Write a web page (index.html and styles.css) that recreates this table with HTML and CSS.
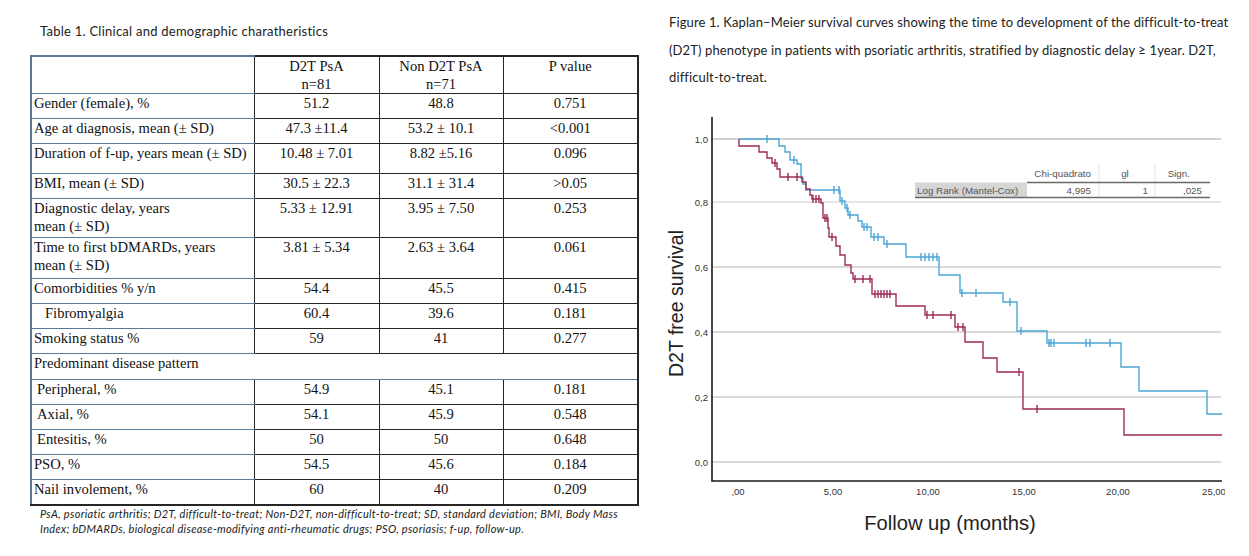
FILE: index.html
```html
<!DOCTYPE html>
<html lang="en">
<head>
<meta charset="utf-8">
<title>Table 1 and Figure 1</title>
<link rel="stylesheet" href="styles.css">
</head>
<body>
<div class="page">
  <section class="table-panel">
    <p class="table-title">Table 1. Clinical and demographic charatheristics</p>
    <table class="data">
      <colgroup><col class="c1"><col class="c2"><col class="c3"><col class="c4"></colgroup>
      <tr class="r-head"><td class="lab"></td><td>D2T PsA<br>n=81</td><td>Non D2T PsA<br>n=71</td><td>P value</td></tr>
      <tr><td class="lab">Gender (female), %</td><td>51.2</td><td>48.8</td><td>0.751</td></tr>
      <tr><td class="lab">Age at diagnosis, mean (± SD)</td><td>47.3 ±11.4</td><td>53.2 ± 10.1</td><td>&lt;0.001</td></tr>
      <tr class="r-tall"><td class="lab">Duration of f-up, years mean (± SD)</td><td>10.48 ± 7.01</td><td>8.82 ±5.16</td><td>0.096</td></tr>
      <tr><td class="lab">BMI, mean (± SD)</td><td>30.5 ± 22.3</td><td>31.1 ± 31.4</td><td>&gt;0.05</td></tr>
      <tr class="r-two"><td class="lab">Diagnostic delay, years<br>mean (± SD)</td><td>5.33 ± 12.91</td><td>3.95 ± 7.50</td><td>0.253</td></tr>
      <tr class="r-twob"><td class="lab">Time to first bDMARDs, years<br>mean (± SD)</td><td>3.81 ± 5.34</td><td>2.63 ± 3.64</td><td>0.061</td></tr>
      <tr><td class="lab">Comorbidities % y/n</td><td>54.4</td><td>45.5</td><td>0.415</td></tr>
      <tr><td class="lab ind1">Fibromyalgia</td><td>60.4</td><td>39.6</td><td>0.181</td></tr>
      <tr><td class="lab">Smoking status %</td><td>59</td><td>41</td><td>0.277</td></tr>
      <tr class="r-pat"><td class="lab span" colspan="4">Predominant disease pattern</td></tr>
      <tr><td class="lab ind2">Peripheral, %</td><td>54.9</td><td>45.1</td><td>0.181</td></tr>
      <tr><td class="lab ind2">Axial, %</td><td>54.1</td><td>45.9</td><td>0.548</td></tr>
      <tr><td class="lab ind2">Entesitis, %</td><td>50</td><td>50</td><td>0.648</td></tr>
      <tr><td class="lab">PSO, %</td><td>54.5</td><td>45.6</td><td>0.184</td></tr>
      <tr class="r-last"><td class="lab">Nail involement, %</td><td>60</td><td>40</td><td>0.209</td></tr>
    </table>
    <p class="footnote">PsA, psoriatic arthritis; D2T, difficult-to-treat; Non-D2T, non-difficult-to-treat; SD, standard deviation; BMI, Body Mass<br>Index; bDMARDs, biological disease-modifying anti-rheumatic drugs; PSO, psoriasis; f-up, follow-up.</p>
  </section>
  <section class="figure-panel">
    <p class="fig-caption">Figure 1. Kaplan–Meier survival curves showing the time to development of the difficult-to-treat<br>(D2T) phenotype in patients with psoriatic arthritis, stratified by diagnostic delay ≥ 1year. D2T,<br>difficult-to-treat.</p>
    <svg class="km" viewBox="640 110 609 446" xmlns="http://www.w3.org/2000/svg">
      <defs>
        <clipPath id="clipx"><rect x="640" y="110" width="585" height="446"/></clipPath>
      </defs>
      <line class="grid top" x1="712" y1="139" x2="1221" y2="139"/>
      <line class="grid light" x1="712" y1="202" x2="1221" y2="202"/>
      <line class="grid" x1="712" y1="267" x2="1221" y2="267"/>
      <line class="grid" x1="712" y1="332" x2="1221" y2="332"/>
      <line class="grid" x1="712" y1="397" x2="1221" y2="397"/>
      <line class="grid" x1="712" y1="462" x2="1221" y2="462"/>

      <text class="tick" x="708" y="142.5" text-anchor="end">1,0</text>
      <text class="tick" x="708" y="205.5" text-anchor="end">0,8</text>
      <text class="tick" x="708" y="270.5" text-anchor="end">0,6</text>
      <text class="tick" x="708" y="335.5" text-anchor="end">0,4</text>
      <text class="tick" x="708" y="400.5" text-anchor="end">0,2</text>
      <text class="tick" x="708" y="465.5" text-anchor="end">0,0</text>

      <g clip-path="url(#clipx)">
        <text class="tick" x="738" y="494.5" text-anchor="middle">,00</text>
        <text class="tick" x="833" y="494.5" text-anchor="middle">5,00</text>
        <text class="tick" x="928" y="494.5" text-anchor="middle">10,00</text>
        <text class="tick" x="1024" y="494.5" text-anchor="middle">15,00</text>
        <text class="tick" x="1118" y="494.5" text-anchor="middle">20,00</text>
        <text class="tick" x="1214" y="494.5" text-anchor="middle">25,00</text>
      </g>

      <text class="axis-title" transform="translate(683 303.5) rotate(-90)" text-anchor="middle">D2T free survival</text>
      <text class="axis-title x" x="950" y="530" text-anchor="middle">Follow up (months)</text>

      <!-- log rank table -->
      <line class="lr-sep" x1="1099" y1="164" x2="1099" y2="197"/>
      <line class="lr-sep" x1="1155" y1="164" x2="1155" y2="197"/>
      <rect class="lr-bg" x="915" y="182.5" width="112" height="14.5"/>
      <text class="lr" x="1091" y="177" text-anchor="end">Chi-quadrato</text>
      <text class="lr" x="1125" y="177" text-anchor="middle">gl</text>
      <text class="lr" x="1190" y="177" text-anchor="end">Sign.</text>
      <text class="lr" x="917" y="193.5">Log Rank (Mantel-Cox)</text>
      <text class="lr" x="1091" y="193.5" text-anchor="end">4,995</text>
      <text class="lr" x="1148" y="193.5" text-anchor="end">1</text>
      <text class="lr" x="1202" y="193.5" text-anchor="end">,025</text>
      <line class="lr-line" x1="1027" y1="182.5" x2="1210" y2="182.5"/>
      <line class="lr-line" x1="915" y1="197.5" x2="1210" y2="197.5"/>

      <!-- curves -->
      <path class="curve blue" d="M739,139 H779 V146 H785 V152 H790 V160 H797 V164 H801 V178 H803 V184 H806 V190 H840 V201 H845 V208 H848 V215 H858 V221 H862 V227 H871 V237 H884 V244 H906 V257 H939 V275 H960 V293 H1003 V302 H1017 V331 H1047 V343 H1121 V367 H1139 V391 H1207 V414 H1222"/>
      <path class="curve blue" d="M767,135v8 M794,156v8 M834,186v8 M839,186v8 M842,197v8 M847,204v8 M850,211v8 M864,223v8 M867,223v8 M874,233v8 M878,233v8 M887,240v8 M921,253v8 M925,253v8 M929,253v8 M933,253v8 M937,253v8 M962,289v8 M976,289v8 M1010,298v8 M1021,327v8 M1049,339v8 M1051,339v8 M1054,339v8 M1086,339v8 M1090,339v8 M1110,339v8"/>
      <path class="curve red" d="M739,139 V146 H759 V152 H767 V158 H772 V163 H777 V169 H780 V177 H802 V182 H806 V189 H810 V195 H812 V199 H821 V203 H823 V218 H828 V228 H829 V237 H836 V246 H840 V255 H845 V265 H851 V273 H853 V279 H872 V294 H896 V306 H925 V315 H955 V327 H965 V342 H983 V358 H997 V372 H1023 V409 H1124 V435 H1222"/>
      <path class="curve red" d="M775,159v8 M788,173v8 M797,173v8 M813,195v8 M816,195v8 M819,195v8 M825,214v8 M827,214v8 M832,233v8 M855,275v8 M863,275v8 M870,275v8 M875,290v8 M878,290v8 M881,290v8 M884,290v8 M887,290v8 M890,290v8 M927,311v8 M933,311v8 M951,311v8 M958,323v8 M963,323v8 M1019,368v8 M1037,405v8"/>

      <path class="axis" d="M712,117 V481 H1222"/>
    </svg>
  </section>
</div>
</body>
</html>
```

FILE: styles.css
```css
html, body {
  margin: 0;
  padding: 0;
  background: #ffffff;
}

body {
  width: 1249px;
  height: 556px;
  overflow: hidden;
}

.page {
  display: flex;
  align-items: flex-start;
}

.table-panel {
  width: 640px;
  flex: none;
  padding-left: 30px;
  box-sizing: border-box;
}

.table-title {
  margin: 23px 0 0 10px;
  font-family: "Lato", "Open Sans", sans-serif;
  font-size: 13px;
  letter-spacing: 0.25px;
  line-height: 16px;
  color: #222;
  white-space: nowrap;
}

.data {
  margin-top: 16px;
  width: 607px;
  border-collapse: collapse;
  table-layout: fixed;
  font-family: "Liberation Serif", "Times New Roman", serif;
  font-size: 14.6px;
  line-height: 18px;
  color: #111;
}

.data col.c1 { width: 223px; }
.data col.c2 { width: 125px; }
.data col.c3 { width: 124px; }
.data col.c4 { width: 135px; }

.data tr { height: 25px; }
.data tr.r-head { height: 37px; }
.data tr.r-tall { height: 30px; }
.data tr.r-two { height: 39px; }
.data tr.r-twob { height: 41px; }
.data tr.r-pat { height: 26px; }

.data td {
  border: 1.5px solid #262626;
  padding: 0 2px;
  vertical-align: top;
  text-align: center;
  white-space: nowrap;
}

.data td.lab {
  text-align: left;
  border-top-color: #587a99;
  border-bottom-color: #587a99;
  border-left: 2px solid #587a99;
  border-right-color: #262626;
}

.data td.span {
  border-right: 2px solid #262626;
}

.data td.ind1 { padding-left: 13px; }
.data td.ind2 { padding-left: 5px; }

.data td:last-child { border-right-width: 2px; }
.data tr.r-head td { border-top-width: 2px; }
.data tr.r-last td { border-bottom: 2px solid #262626; }

.footnote {
  margin: 0 0 0 10px;
  font-family: "Lato", "Open Sans", sans-serif;
  font-style: italic;
  font-size: 11px;
  letter-spacing: 0.3px;
  line-height: 15px;
  color: #222;
  white-space: nowrap;
}

.figure-panel {
  width: 609px;
  flex: none;
}

.fig-caption {
  margin: 0;
  height: 110px;
  box-sizing: border-box;
  padding: 9px 0 0 29px;
  font-family: "Lato", "Open Sans", sans-serif;
  font-size: 13px;
  letter-spacing: 0.12px;
  line-height: 27.5px;
  color: #222;
  white-space: nowrap;
}

.km {
  display: block;
  width: 609px;
  height: 446px;
}

.km .grid {
  stroke: #b4b4b4;
  stroke-width: 1;
}

.km .grid.light { stroke: #cccccc; }
.km .grid.top { stroke: #d2d2d2; stroke-width: 2; }

.km .axis {
  fill: none;
  stroke: #1a1a1a;
  stroke-width: 1.6;
}

.km .tick {
  font-family: "Liberation Sans", Arial, sans-serif;
  font-size: 9.5px;
  fill: #333;
}

.km .axis-title {
  font-family: "Liberation Sans", Arial, sans-serif;
  font-size: 19.5px;
  fill: #222;
}

.km .axis-title.x {
  font-size: 20.2px;
}

.km .lr {
  font-family: "Liberation Sans", Arial, sans-serif;
  font-size: 9.8px;
  fill: #555;
}

.km .lr-bg { fill: #d6d6d6; }

.km .lr-line {
  stroke: #6a6a6a;
  stroke-width: 1.3;
}

.km .lr-sep {
  stroke: #e3e3e3;
  stroke-width: 1;
}

.km .curve {
  fill: none;
  stroke-width: 1.4;
}

.km .curve.blue { stroke: #4ba6d6; }
.km .curve.red { stroke: #9d2c5a; }
```
